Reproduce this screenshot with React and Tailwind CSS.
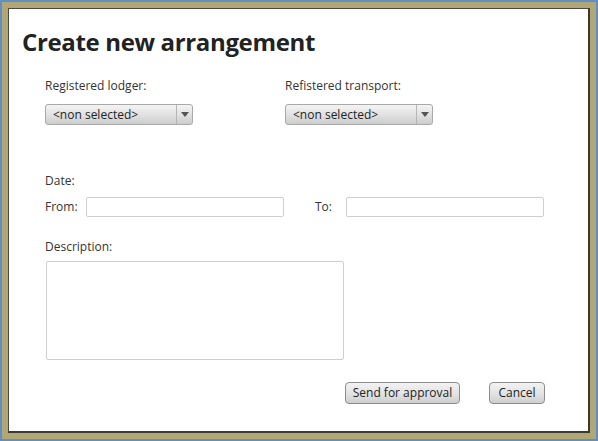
import React from 'react'

function Select({ value }) {
  return (
    <div className="flex h-[21px] w-[148px] items-stretch rounded-[3px] border border-[#a9a9a9] bg-gradient-to-b from-[#f4f4f4] via-[#e2e2e2] to-[#cdcdcd] text-[12px] text-[#222]">
      <div className="flex flex-1 items-center pl-[7px]">{value}</div>
      <div className="flex w-[16px] items-center justify-center border-l border-[#b5b5b5]">
        <svg width="8" height="5" viewBox="0 0 8 5">
          <path d="M0 0 L8 0 L4 5 Z" fill="#555" />
        </svg>
      </div>
    </div>
  )
}

function Button({ children, className }) {
  return (
    <button className={`h-[22px] rounded-[4px] border border-[#8c8c8c] bg-gradient-to-b from-[#f2f2f2] via-[#e4e4e4] to-[#cfcfcf] text-[12px] text-[#222] ${className}`}>
      {children}
    </button>
  )
}

export default function App() {
  return (
    <div
      className="h-[441px] w-[598px] bg-[#5f8fc3] p-[2px]"
      style={{ fontFamily: '"Open Sans", "Noto Sans", sans-serif' }}
    >
      <div className="h-full w-full bg-[#b1a676] p-[6px]">
        <div className="h-full w-full border-t border-l border-[#4a4a40] border-r-2 border-b-2 border-r-[#3a3a32] border-b-[#3a3a32] bg-white">
          <div className="flex h-full flex-col pl-[13px] pt-[17px]">
            <h1 className="text-[24px] font-bold leading-[32px] tracking-[-0.35px] text-[#222]">Create new arrangement</h1>

            <div className="mt-[20px] flex pl-[23px] text-[12px] text-[#333]">
              <div className="w-[240px]">
                <div className="leading-[16px]">Registered lodger:</div>
                <div className="mt-[10px]"><Select value="<non selected>" /></div>
              </div>
              <div>
                <div className="leading-[16px]">Refistered transport:</div>
                <div className="mt-[10px]"><Select value="<non selected>" /></div>
              </div>
            </div>

            <div className="mt-[48px] pl-[23px] text-[12px] text-[#333]">
              <div className="leading-[16px]">Date:</div>
              <div className="mt-[8px] flex items-center">
                <span className="w-[41px]">From:</span>
                <div className="h-[20px] w-[198px] rounded-[2px] border border-[#cfcfcf]" />
                <span className="ml-[31px] w-[31px]">To:</span>
                <div className="h-[20px] w-[198px] rounded-[2px] border border-[#cfcfcf]" />
              </div>
              <div className="mt-[22px] leading-[16px]">Description:</div>
              <div className="ml-[1px] mt-[6px] h-[99px] w-[298px] rounded-[2px] border border-[#cfcfcf]" />
            </div>

            <div className="mt-[22px] flex pl-[323px]">
              <Button className="w-[115px]">Send for approval</Button>
              <Button className="ml-[29px] w-[56px]">Cancel</Button>
            </div>
          </div>
        </div>
      </div>
    </div>
  )
}
